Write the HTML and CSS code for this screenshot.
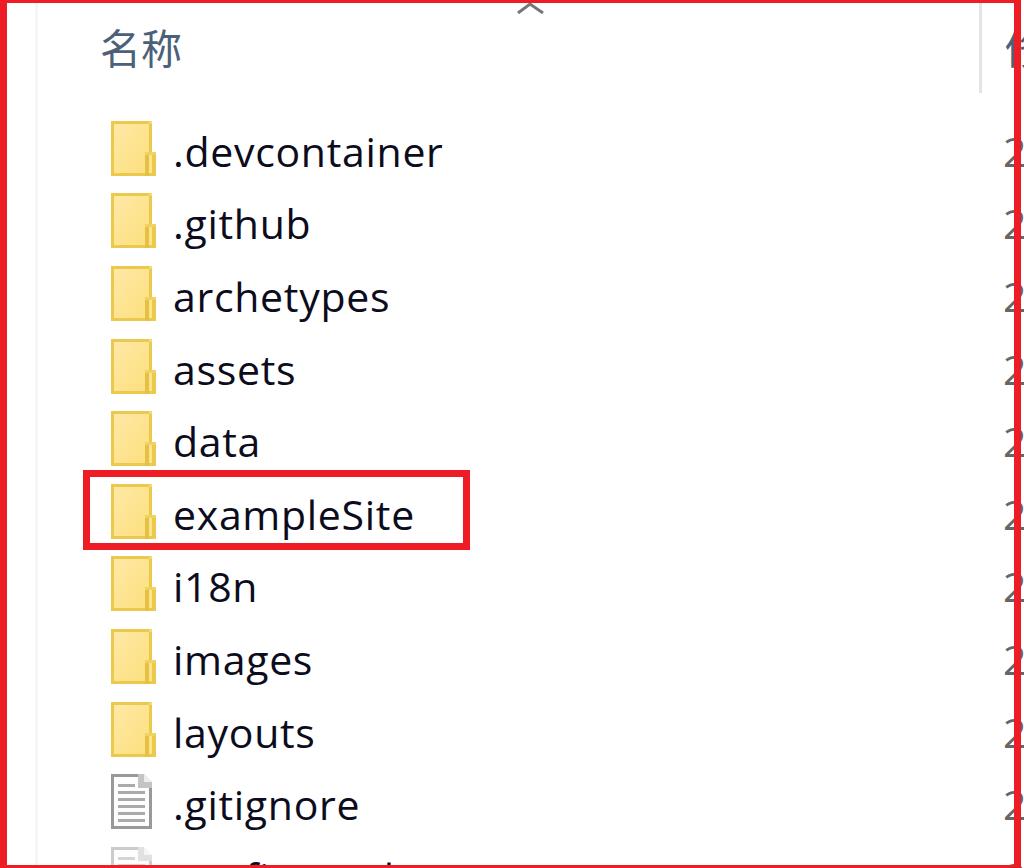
FILE: index.html
```html
<!DOCTYPE html>
<html lang="zh-CN">
<head>
  <meta charset="UTF-8" />
  <title>名称</title>
  <link rel="stylesheet" href="styles.css">
</head>
<body>
  <svg class="defs" width="0" height="0" aria-hidden="true">
    <defs>
      <linearGradient id="folderFill" x1="0" y1="0" x2="1" y2="1">
        <stop offset="0" stop-color="#fee9a6" />
        <stop offset="1" stop-color="#fddf7d" />
      </linearGradient>
      <symbol id="folder" viewBox="0 0 45 55">
        <rect x="0" y="0" width="41" height="55" fill="#ebc94c" />
        <rect x="38" y="0" width="3" height="3" fill="#f3d877" />
        <rect x="3" y="3" width="35" height="49" fill="url(#folderFill)" />
        <rect x="34" y="31" width="11" height="24" fill="#ebc94c" />
        <rect x="34" y="31" width="11" height="3" fill="#f0d165" />
        <rect x="34" y="34" width="4" height="21" fill="#e6c043" />
        <rect x="38" y="34" width="3" height="18" fill="#fde38d" />
      </symbol>
      <symbol id="doc" viewBox="0 0 41 55">
        <path d="M1.5 1.5H32L39.5 9V53.5H1.5Z" fill="#fdfdfd" stroke="#999" stroke-width="3" />
        <path d="M27 0H33V8H41V14H27Z" fill="#c4c4c4" />
        <path d="M33 0L41 8H33Z" fill="#ececec" />
        <g fill="#aaa">
          <rect x="7" y="10" width="17" height="3" />
          <rect x="7" y="17" width="27" height="3" />
          <rect x="7" y="24" width="27" height="3" />
          <rect x="7" y="31" width="27" height="3" />
          <rect x="7" y="38" width="27" height="3" />
          <rect x="7" y="45" width="27" height="3" />
        </g>
      </symbol>
    </defs>
  </svg>

  <div class="explorer">
    <div class="header">
      <svg class="sort-arrow" width="30" height="12" viewBox="0 0 30 12">
        <path d="M2 11L14 2L27 11" fill="none" stroke="#777" stroke-width="3" />
      </svg>
      <span class="col-name">名称</span>
      <span class="col-date">修改日期</span>
    </div>

    <ul class="file-list">
      <li class="row">
        <svg class="icon"><use href="#folder" /></svg>
        <span class="name">.devcontainer</span>
        <span class="date">2021/6/18</span>
      </li>
      <li class="row">
        <svg class="icon"><use href="#folder" /></svg>
        <span class="name">.github</span>
        <span class="date">2021/6/18</span>
      </li>
      <li class="row">
        <svg class="icon"><use href="#folder" /></svg>
        <span class="name">archetypes</span>
        <span class="date">2021/6/18</span>
      </li>
      <li class="row">
        <svg class="icon"><use href="#folder" /></svg>
        <span class="name">assets</span>
        <span class="date">2021/6/18</span>
      </li>
      <li class="row">
        <svg class="icon"><use href="#folder" /></svg>
        <span class="name">data</span>
        <span class="date">2021/6/18</span>
      </li>
      <li class="row">
        <svg class="icon"><use href="#folder" /></svg>
        <span class="name">exampleSite</span>
        <span class="date">2021/6/18</span>
      </li>
      <li class="row">
        <svg class="icon"><use href="#folder" /></svg>
        <span class="name">i18n</span>
        <span class="date">2021/6/18</span>
      </li>
      <li class="row">
        <svg class="icon"><use href="#folder" /></svg>
        <span class="name">images</span>
        <span class="date">2021/6/18</span>
      </li>
      <li class="row">
        <svg class="icon"><use href="#folder" /></svg>
        <span class="name">layouts</span>
        <span class="date">2021/6/18</span>
      </li>
      <li class="row">
        <svg class="icon doc"><use href="#doc" /></svg>
        <span class="name">.gitignore</span>
        <span class="date">2021/6/18</span>
      </li>
      <li class="row row-faded">
        <svg class="icon doc"><use href="#doc" /></svg>
        <span class="name">config.toml</span>
        <span class="date">2021/6/18</span>
      </li>
    </ul>
  </div>

  <div class="frame"></div>
  <div class="highlight"></div>
</body>
</html>
```

FILE: styles.css
```css
* { box-sizing: border-box; }
html, body {
  margin: 0;
  height: 868px;
  overflow: hidden;
  background: #fff;
}
body {
  position: relative;
  font-family: "Open Sans", "Noto Sans CJK SC", sans-serif;
  color: #0c0c1c;
}
.defs {
  position: absolute;
}
.explorer {
  display: flex;
  flex-direction: column;
  height: 100%;
  margin-left: 35px;
  border-left: 3px solid #f6f6f6;
  overflow: hidden;
}
.header {
  flex: none;
  position: relative;
  display: grid;
  grid-template-columns: 905px 1fr;
  height: 93px;
  padding: 17px 0 0 62px;
  font-family: "Noto Sans CJK SC", sans-serif;
  font-size: 41px;
  line-height: 58px;
  color: #4c607a;
  white-space: nowrap;
  overflow: hidden;
}
.header::after {
  content: "";
  position: absolute;
  left: 941px;
  top: 0;
  height: 93px;
  width: 3px;
  background: #e4e4e4;
}
.sort-arrow {
  position: absolute;
  left: 478px;
  top: 2px;
}
.file-list {
  flex: none;
  list-style: none;
  margin: 0;
  padding: 19px 0 0 73px;
}
.row {
  display: grid;
  grid-template-columns: 45px 835px 1fr;
  column-gap: 6px;
  align-items: center;
  height: 72.6px;
  white-space: nowrap;
  font-size: 41px;
  line-height: 55px;
}
.icon {
  width: 45px;
  height: 55px;
}
.icon.doc {
  width: 41px;
}
.row-faded .icon {
  opacity: 0.5;
}
.name {
  padding: 6px 0 0 11px;
  letter-spacing: 0.7px;
}
.date {
  overflow: hidden;
  padding-top: 6px;
  color: #666;
}
.frame {
  position: absolute;
  left: 0;
  top: 0;
  width: 1021px;
  height: 868px;
  border-style: solid;
  border-color: #ee1c25;
  border-width: 3px 7px;
  pointer-events: none;
}
.highlight {
  position: absolute;
  left: 83px;
  top: 470px;
  width: 387px;
  height: 80px;
  border: 7px solid #ee1c25;
  pointer-events: none;
}
```
